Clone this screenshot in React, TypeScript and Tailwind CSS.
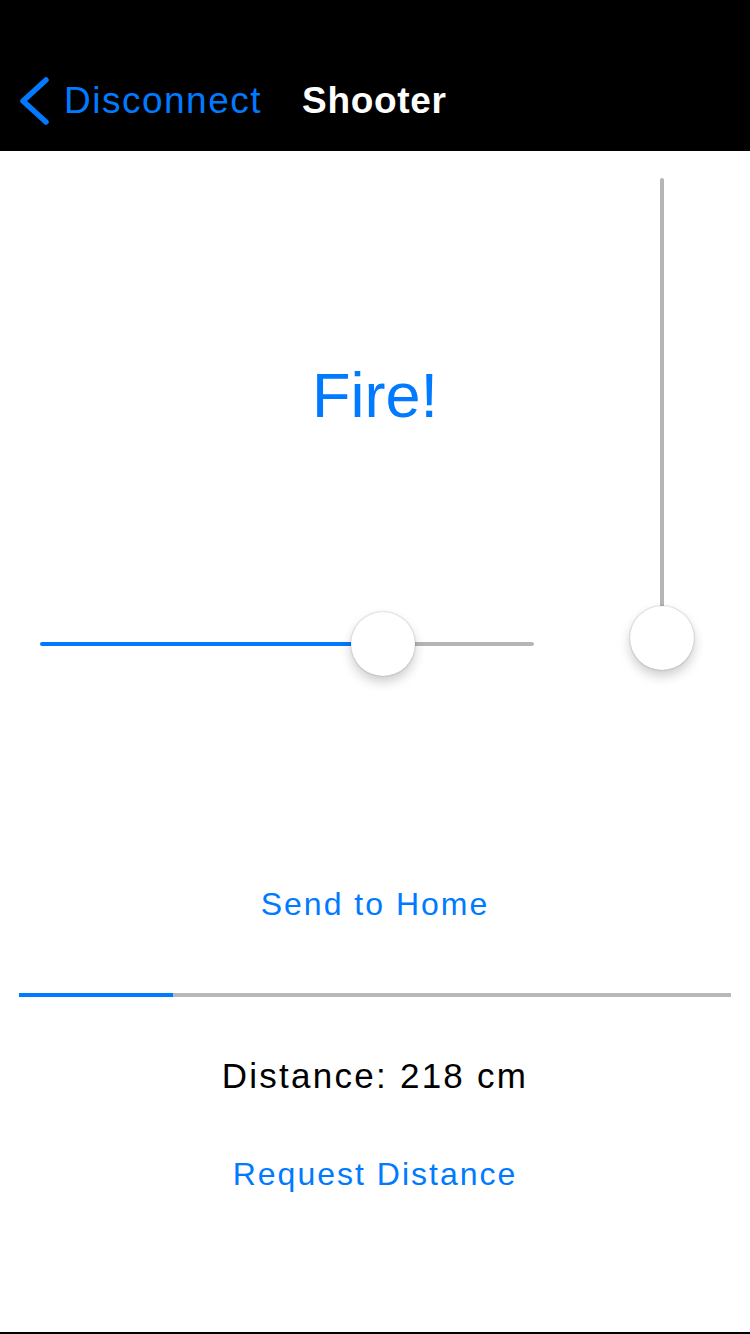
import React from 'react'

const font = { fontFamily: '"Liberation Sans", Arial, sans-serif' }

// Pulgar del slider (overlay sobre la pista)
function Thumb({ className }: { className: string }) {
  return (
    <div
      className={`absolute w-[64px] h-[64px] rounded-full bg-white shadow-[0_6px_12px_rgba(0,0,0,0.2),0_0_2px_rgba(0,0,0,0.3)] ${className}`}
    />
  )
}

export default function App() {
  return (
    <div className="w-[750px] h-[1334px] bg-white overflow-hidden" style={font}>
      {/* Header */}
      <div className="h-[151px] bg-black flex items-center pt-[50px]">
        <svg width="30" height="48" viewBox="0 0 30 48" className="ml-[19px]">
          <polyline
            points="27,3 4,24 27,45"
            fill="none"
            stroke="#007aff"
            strokeWidth="5.5"
            strokeLinecap="round"
            strokeLinejoin="round"
          />
        </svg>
        <span className="ml-[15px] text-[37px] leading-none tracking-[1.5px] text-[#007aff]">Disconnect</span>
        <span className="ml-[40px] text-[37px] leading-none tracking-[0.7px] font-bold text-white">Shooter</span>
      </div>

      {/* Body */}
      <div className="h-[1183px] border-b-2 border-black flex flex-col">
        <div className="flex">
          {/* Left column */}
          <div className="w-[574px] flex flex-col">
            <div className="pl-[176px] mt-[213px] text-center text-[63px] leading-[63px] text-[#007aff]">
              Fire!
            </div>
            <div className="relative mx-[40px] mt-[185px] h-[64px] flex items-center">
              <div className="w-[343px] h-[4px] bg-[#007aff] rounded-l-full" />
              <div className="flex-1 h-[4px] bg-[#b5b5b5] rounded-r-full" />
              <Thumb className="left-[311px] top-0" />
            </div>
          </div>

          {/* Right column: vertical slider */}
          <div className="flex-1 flex justify-center pt-[27px]">
            <div className="relative w-[64px] h-[492px] flex justify-center">
              <div className="w-[4px] h-[460px] bg-[#b5b5b5] rounded-t-full" />
              <Thumb className="left-0 top-[428px]" />
            </div>
          </div>
        </div>

        <div className="mt-[212px] text-center text-[32px] leading-[32px] tracking-[2px] text-[#007aff]">
          Send to Home
        </div>

        <div className="mt-[73px] mx-[19px] h-[4px] flex">
          <div className="w-[154px] bg-[#007aff]" />
          <div className="flex-1 bg-[#b8b8b8]" />
        </div>

        <div className="mt-[61px] text-center text-[35px] leading-[35px] tracking-[2.25px] text-black">
          Distance: 218 cm
        </div>

        <div className="mt-[65px] text-center text-[32px] leading-[32px] tracking-[2px] text-[#007aff]">
          Request Distance
        </div>
      </div>
    </div>
  )
}
